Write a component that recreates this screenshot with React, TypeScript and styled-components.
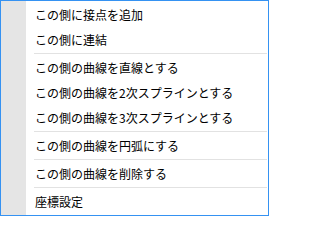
import React from 'react'
import styled, { createGlobalStyle } from 'styled-components'

const GlobalStyle = createGlobalStyle`
    html, body {
        margin: 0;
        padding: 0;
        background: #ffffff;
    }
`

const Menu = styled.div`
    width: 269px;
    height: 216px;
    box-sizing: border-box;
    border: 1px solid #3592f2;
    padding: 1px 0;
    background: linear-gradient(90deg, #e5e5e5 0px, #e5e5e5 25px, #ffffff 25px);
    display: flex;
    flex-direction: column;
    font-family: "Noto Sans CJK JP", "Noto Sans", sans-serif;
    font-size: 12px;
    color: #000000;
`

const Item = styled.div`
    height: 25px;
    line-height: 25px;
    padding-left: 34px;
    white-space: nowrap;
`

const Separator = styled.div`
    height: 1px;
    margin: 1px 1px 1px 33px;
    background: #e2e2e2;
`

type Entry = { label: string; sep?: boolean }

const entries: Entry[] = [
    { label: 'この側に接点を追加' },
    { label: 'この側に連結', sep: true },
    { label: 'この側の曲線を直線とする' },
    { label: 'この側の曲線を2次スプラインとする' },
    { label: 'この側の曲線を3次スプラインとする', sep: true },
    { label: 'この側の曲線を円弧にする', sep: true },
    { label: 'この側の曲線を削除する', sep: true },
    { label: '座標設定' },
]

const App = () => {
    return (
        <>
            <GlobalStyle />
            <Menu>
                {entries.map((item) => (
                    <React.Fragment key={item.label}>
                        <Item>{item.label}</Item>
                        {item.sep && <Separator />}
                    </React.Fragment>
                ))}
            </Menu>
        </>
    )
}

export default App
